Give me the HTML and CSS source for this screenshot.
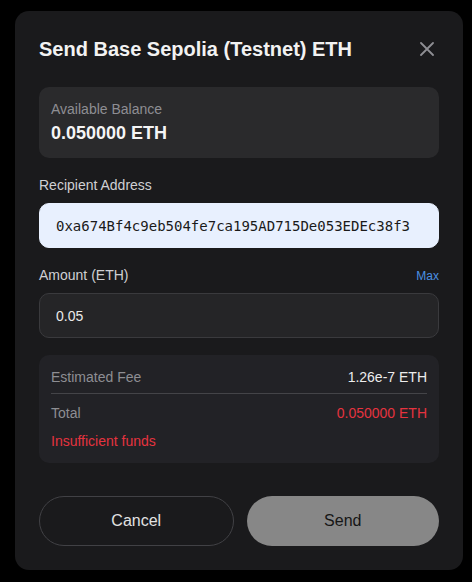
FILE: index.html
```html
<!DOCTYPE html>
<html lang="en">
<head>
    <meta charset="UTF-8">
    <meta name="viewport" content="width=device-width, initial-scale=1.0">
    <title>Send ETH</title>
    <link rel="stylesheet" href="styles.css">
</head>
<body>
    <div class="modal">
        <div class="modal-header">
            <h2>Send Base Sepolia (Testnet) ETH</h2>
            <button class="close-btn" aria-label="Close">
                <svg width="14" height="14" viewBox="0 0 14 14">
                    <path d="M1 1L13 13M13 1L1 13" stroke="currentColor" stroke-width="1.8" stroke-linecap="round"/>
                </svg>
            </button>
        </div>

        <!-- Balance -->
        <div class="balance-box">
            <div class="balance-label">Available Balance</div>
            <div class="balance-value">0.050000 ETH</div>
        </div>

        <div class="field">
            <label class="field-label">Recipient Address</label>
            <input type="text" class="input address" value="0xa674Bf4c9eb504fe7ca195AD715De053EDEc38f3">
        </div>

        <div class="field">
            <div class="label-row">
                <label class="field-label">Amount (ETH)</label>
                <span class="max-link">Max</span>
            </div>
            <input type="text" class="input amount" value="0.05">
        </div>

        <!-- Fee summary -->
        <div class="fee-box">
            <div class="fee-row">
                <span class="fee-name">Estimated Fee</span>
                <span class="fee-value">1.26e-7 ETH</span>
            </div>
            <div class="fee-row total">
                <span class="fee-name">Total</span>
                <span class="fee-value error">0.050000 ETH</span>
            </div>
            <div class="error-msg">Insufficient funds</div>
        </div>

        <div class="actions">
            <button class="btn cancel">Cancel</button>
            <button class="btn send">Send</button>
        </div>
    </div>
</body>
</html>
```

FILE: styles.css
```css
* {
    margin: 0;
    padding: 0;
    box-sizing: border-box;
    font-family: "Liberation Sans", Arial, sans-serif;
}

body {
    background: #000;
    color: #fff;
    padding: 11px 0 0 15px;
}

.modal {
    width: 448px;
    background: #1a1a1c;
    border-radius: 14px;
    padding: 24px;
}

.modal-header {
    display: flex;
    justify-content: space-between;
    align-items: center;
    margin-bottom: 24px;
}

.modal-header h2 {
    font-size: 20px;
    line-height: 28px;
    font-weight: bold;
    color: #f2f2f2;
}

.close-btn {
    background: none;
    border: none;
    color: #8e8e93;
    width: 24px;
    height: 24px;
    display: flex;
    align-items: center;
    justify-content: center;
    cursor: pointer;
}

.balance-box {
    background: #2a2a2c;
    border-radius: 10px;
    padding: 12px;
    height: 71px;
}

.balance-label {
    font-size: 14px;
    line-height: 20px;
    color: #8e8e93;
    margin-bottom: 2px;
}

.balance-value {
    font-size: 18px;
    line-height: 24px;
    font-weight: bold;
    color: #f5f5f5;
}

.field {
    margin-top: 17px;
}

.label-row {
    display: flex;
    justify-content: space-between;
    align-items: center;
}

.field-label {
    display: block;
    font-size: 14px;
    line-height: 21px;
    color: #d0d0d4;
    margin-bottom: 7px;
}

.max-link {
    font-size: 12px;
    color: #4a90e2;
    margin-bottom: 7px;
    cursor: pointer;
}

.input {
    display: block;
    width: 100%;
    height: 45px;
    border-radius: 10px;
    padding: 0 16px;
    font-size: 14px;
    outline: none;
}

.input.address {
    background: #e8f0fe;
    border: 1px solid #e8f0fe;
    color: #1a1a1a;
    font-family: "DejaVu Sans Mono", monospace;
    font-size: 14px;
}

.input.amount {
    background: #252527;
    border: 1px solid #3a3a3d;
    color: #eaeaea;
}

.fee-box {
    margin-top: 17px;
    background: #222226;
    border-radius: 10px;
    padding: 12px;
}

.fee-row {
    display: flex;
    justify-content: space-between;
    font-size: 14px;
    line-height: 20px;
}

.fee-row.total {
    border-top: 1px solid #444448;
    margin-top: 6px;
    padding-top: 9px;
}

.fee-name {
    color: #8e8e93;
}

.fee-value {
    color: #ececec;
}

.fee-value.error, .error-msg {
    color: #e5333f;
}

.error-msg {
    font-size: 14px;
    line-height: 20px;
    margin-top: 8px;
}

.actions {
    display: flex;
    gap: 13px;
    margin-top: 33px;
}

.btn {
    flex: 1;
    height: 50px;
    border-radius: 25px;
    font-size: 16px;
    cursor: pointer;
}

.btn.cancel {
    background: transparent;
    border: 1px solid #414145;
    color: #e2e2e2;
}

.btn.send {
    background: #878787;
    border: none;
    color: #161616;
}
```
